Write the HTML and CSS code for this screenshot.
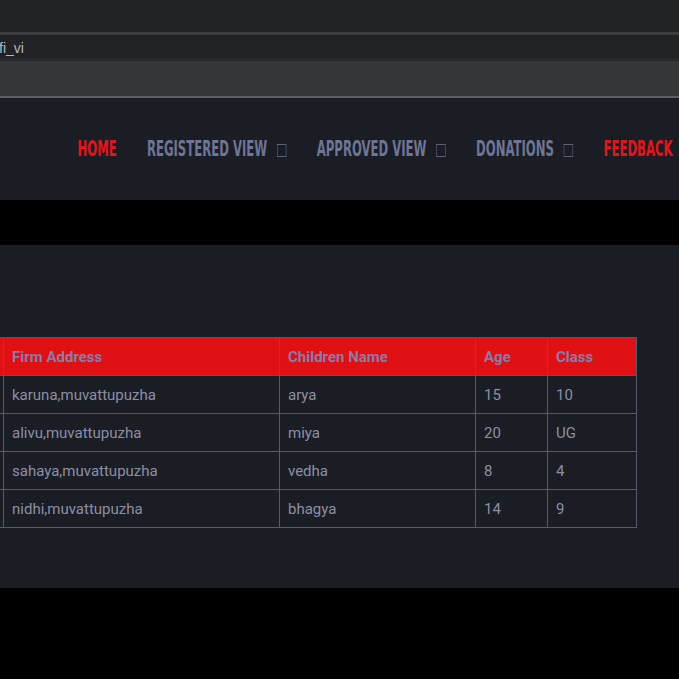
FILE: index.html
```html
<!DOCTYPE html>
<html lang="en">
<head>
<meta charset="utf-8">
<title>Children List</title>
<link rel="stylesheet" href="styles.css">
</head>
<body>
<div class="chrome">
  <div class="bar-top"></div>
  <div class="bar-line"></div>
  <div class="bar-url"><span class="url-text">fi_vi</span></div>
  <div class="bar-sep"></div>
  <div class="bar-tools"></div>
  <div class="bar-edge"></div>
</div>
<header class="navbar">
  <nav class="menu">
    <a class="menu-item active">HOME</a>
    <a class="menu-item">REGISTERED VIEW<span class="tofu"></span></a>
    <a class="menu-item">APPROVED VIEW<span class="tofu"></span></a>
    <a class="menu-item">DONATIONS<span class="tofu"></span></a>
    <a class="menu-item active">FEEDBACK</a>
  </nav>
</header>
<div class="gap"></div>
<section class="content">
  <table class="data">
    <thead>
      <tr><th class="c0"></th><th class="c1">Firm Address</th><th class="c2">Children Name</th><th class="c3">Age</th><th class="c4">Class</th></tr>
    </thead>
    <tbody>
      <tr><td class="c0"></td><td>karuna,muvattupuzha</td><td>arya</td><td>15</td><td>10</td></tr>
      <tr><td class="c0"></td><td>alivu,muvattupuzha</td><td>miya</td><td>20</td><td>UG</td></tr>
      <tr><td class="c0"></td><td>sahaya,muvattupuzha</td><td>vedha</td><td>8</td><td>4</td></tr>
      <tr><td class="c0"></td><td>nidhi,muvattupuzha</td><td>bhagya</td><td>14</td><td>9</td></tr>
    </tbody>
  </table>
</section>
<div class="footer-gap"></div>
</body>
</html>
```
FILE: styles.css
```css
html, body {
  margin: 0;
  padding: 0;
  background: #000;
  overflow: hidden;
}
body {
  font-family: Roboto, "Liberation Sans", sans-serif;
  width: 679px;
  height: 679px;
}
.chrome { display: flex; flex-direction: column; }
.bar-top { height: 32px; background: #212226; }
.bar-line { height: 3px; background: #3b3c40; }
.bar-url {
  height: 23px;
  background: #212226;
  display: flex;
  align-items: flex-end;
  box-sizing: border-box;
  padding-bottom: 2px;
}
.url-text {
  font-family: "Liberation Sans", sans-serif;
  font-size: 14px;
  color: #b8b9bc;
  margin-left: -1px;
}
.bar-sep { height: 3px; background: #27282c; }
.bar-tools { height: 35px; background: #35363a; }
.bar-edge { height: 2px; background: #5d5e62; }

.navbar {
  height: 102px;
  background: #1b1d24;
  display: flex;
  align-items: center;
  justify-content: flex-end;
  padding-right: 6px;
}
.menu {
  display: flex;
  align-items: center;
  gap: 51px;
  transform: scaleX(0.59);
  transform-origin: right center;
  margin-top: -2px;
}
.menu-item {
  font-family: "DejaVu Sans Condensed", "DejaVu Sans", sans-serif;
  font-stretch: condensed;
  font-weight: 700;
  font-size: 22px;
  color: #6e7596;
  display: flex;
  align-items: center;
  white-space: nowrap;
}
.menu-item.active { color: #e0161c; }
.tofu {
  display: inline-block;
  width: 14px;
  height: 11px;
  border: 1px solid #5c6178;
  margin-left: 17px;
  margin-top: 5px;
}

.gap { height: 45px; background: #000; }

.content {
  height: 343px;
  background: #1b1d24;
  box-sizing: border-box;
  padding-top: 92px;
  overflow: hidden;
}
.data {
  border-collapse: collapse;
  margin-left: -117px;
  font-size: 15px;
  table-layout: fixed;
}
.data th, .data td {
  border: 1px solid #565a68;
  height: 38px;
  padding: 0 8px;
  text-align: left;
  box-sizing: border-box;
  white-space: nowrap;
}
.data th {
  background: #e01115;
  color: #8a7ca8;
  font-weight: 700;
}
.data td {
  color: #8b8fa6;
}
.data .c0 { width: 120px; }
.data .c1 { width: 276px; }
.data .c2 { width: 196px; }
.data .c3 { width: 72px; }
.data .c4 { width: 89px; }
.footer-gap { height: 91px; background: #000; }
```
